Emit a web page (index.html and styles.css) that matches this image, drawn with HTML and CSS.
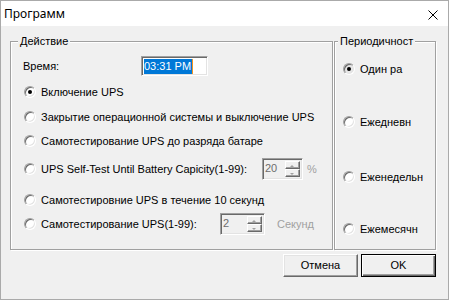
FILE: index.html
```html
<!DOCTYPE html>
<html lang="ru">
<head>
  <meta charset="UTF-8">
  <title>Программ</title>
  <link rel="stylesheet" href="styles.css">
</head>
<body>
  <div class="window">
    <div class="titlebar">
      <span class="title">Программ</span>
      <svg class="close" width="10" height="10" viewBox="0 0 10 10">
        <path d="M0.5 0.5 L9.5 9.5 M9.5 0.5 L0.5 9.5" stroke="#000" stroke-width="1"/>
      </svg>
    </div>

    <div class="content">
      <div class="groups">
        <fieldset class="group group-action">
          <legend>Действие</legend>
          <div class="row row-time">
            <span class="time-label">Время:</span>
            <div class="edit time-edit"><span class="selected">03:31 PM</span><span class="caret"></span></div>
          </div>
          <div class="row row-1"><span class="radio checked"></span><span class="opt">Включение UPS</span></div>
          <div class="row row-2"><span class="radio"></span><span class="opt">Закрытие операционной системы и выключение UPS</span></div>
          <div class="row row-3"><span class="radio"></span><span class="opt">Самотестирование UPS до разряда батаре</span></div>
          <div class="row row-4">
            <span class="radio"></span><span class="opt opt-capacity">UPS Self-Test Until Battery Capicity(1-99):</span>
            <div class="edit spin spin-percent">
              <span class="spin-value">20</span>
              <div class="spin-buttons"><span class="spin-btn up"></span><span class="spin-btn down"></span></div>
            </div>
            <span class="unit">%</span>
          </div>
          <div class="row row-5"><span class="radio"></span><span class="opt">Самотестировние UPS в течение 10 секунд</span></div>
          <div class="row row-6">
            <span class="radio"></span><span class="opt opt-seconds">Самотестирование UPS(1-99):</span>
            <div class="edit spin spin-seconds">
              <span class="spin-value">2</span>
              <div class="spin-buttons"><span class="spin-btn up"></span><span class="spin-btn down"></span></div>
            </div>
            <span class="unit unit-seconds">Секунд</span>
          </div>
        </fieldset>

        <fieldset class="group group-period">
          <legend>Периодичност</legend>
          <div class="row prow-1"><span class="radio checked grey"></span><span class="opt">Один ра</span></div>
          <div class="row prow-2"><span class="radio"></span><span class="opt">Ежедневн</span></div>
          <div class="row prow-3"><span class="radio"></span><span class="opt">Еженедельн</span></div>
          <div class="row prow-4"><span class="radio"></span><span class="opt">Ежемесячн</span></div>
        </fieldset>
      </div>

      <div class="buttons">
        <button class="btn">Отмена</button>
        <button class="btn btn-default">OK</button>
      </div>
    </div>
  </div>
</body>
</html>
```

FILE: styles.css
```css
/* Classic dialog */
html, body {
  margin: 0;
  padding: 0;
  background: #f0f0f0;
}

body {
  font-family: 'Liberation Sans', Arial, sans-serif;
  font-size: 11px;
  line-height: 13px;
  color: #000;
}

.window {
  width: 449px;
  height: 300px;
  box-sizing: border-box;
  border: 1px solid #aaaaaa;
  background: #f0f0f0;
  overflow: hidden;
}

.titlebar {
  height: 25px;
  background: #fff;
  display: flex;
  align-items: center;
  justify-content: space-between;
  padding: 0 10px 0 3px;
}

.title {
  font-family: 'Noto Sans', sans-serif;
  font-size: 12px;
  line-height: 16px;
  margin-top: 1px;
}

.close {
  display: block;
  margin-top: 2px;
}

.content {
  padding: 9px 11px 0 9px;
}

.groups {
  display: flex;
  gap: 1px;
  height: 215px;
}

/* Etched group boxes */
.group {
  margin: 0;
  padding: 0;
  min-width: 0;
  box-sizing: border-box;
  border: 1px solid #a0a0a0;
  box-shadow: inset 1px 1px #fff, 1px 1px #fff;
}

.group legend {
  padding: 0 2px;
  background: #f0f0f0;
  line-height: 13px;
}

.group-action {
  width: 323px;
}

.group-action legend {
  margin-left: 7px;
}

.group-period {
  width: 102px;
}

.group-period legend {
  margin-left: 3px;
}

.row {
  display: flex;
  align-items: center;
  height: 20px;
  white-space: nowrap;
}

.group-action .row {
  padding-left: 13px;
}

.group-period .row {
  padding-left: 8px;
}

.row-time { margin-top: 8px; padding-left: 12px; }
.row-1 { margin-top: 6px; }
.row-2 { margin-top: 5px; }
.row-3 { margin-top: 4px; }
.row-4 { margin-top: 7px; height: 22px; }
.row-5 { margin-top: 10px; }
.row-6 { margin-top: 3px; height: 22px; }

.prow-1 { margin-top: 11px; }
.prow-2 { margin-top: 33px; }
.prow-3 { margin-top: 35px; }
.prow-4 { margin-top: 32px; }

.group-action .row-time {
  padding-left: 12px;
}

.time-label {
  width: 118px;
}

/* Radio buttons */
.radio {
  position: relative;
  flex: none;
  width: 12px;
  height: 12px;
  box-sizing: border-box;
  border-radius: 50%;
  border: 1px solid;
  border-color: #a0a0a0 #fff #fff #a0a0a0;
  box-shadow: inset 1px 1px #696969, inset -1px -1px #e3e3e3;
  background: #fff;
}

.radio.grey {
  background: #e6e6e6;
}

.radio.checked::after {
  content: "";
  position: absolute;
  left: 3px;
  top: 3px;
  width: 4px;
  height: 4px;
  border-radius: 50%;
  background: #000;
}

.opt {
  margin-left: 5px;
}

.opt-capacity {
  width: 221px;
}

.opt-seconds {
  width: 179px;
}

/* Sunken edit boxes */
.edit {
  box-sizing: border-box;
  border: 1px solid;
  border-color: #a0a0a0 #fff #fff #a0a0a0;
  box-shadow: inset 1px 1px #696969, inset -1px -1px #e3e3e3;
}

.time-edit {
  width: 67px;
  height: 20px;
  background: #fff;
  display: flex;
  align-items: center;
  padding: 1px 2px 0;
}

.selected {
  background: #0078d7;
  color: #fff;
  line-height: 15px;
  padding-right: 1px;
}

.caret {
  width: 1px;
  height: 15px;
  background: #f7941d;
}

.spin {
  display: flex;
  height: 22px;
  background: #f0f0f0;
  padding: 2px;
}

.spin-percent {
  width: 41px;
}

.spin-seconds {
  width: 45px;
}

.spin-value {
  flex: 1;
  color: #6d6d6d;
  line-height: 15px;
}

.spin-buttons {
  width: 15px;
  display: flex;
  flex-direction: column;
}

.spin-btn {
  flex: 1;
  position: relative;
  box-sizing: border-box;
  border: 1px solid;
  border-color: #fff #696969 #696969 #fff;
  box-shadow: inset -1px -1px #a0a0a0;
  background: #f0f0f0;
}

.spin-btn::after {
  content: "";
  position: absolute;
  left: 4px;
  border-left: 2px solid transparent;
  border-right: 2px solid transparent;
}

.spin-btn.up::after {
  top: 3px;
  border-bottom: 2px solid #a0a0a0;
}

.spin-btn.down::after {
  top: 3px;
  border-top: 2px solid #a0a0a0;
}

.unit {
  margin-left: 4px;
  color: #a0a0a0;
}

.unit-seconds {
  margin-left: 12px;
}

/* Buttons */
.buttons {
  display: flex;
  justify-content: flex-end;
  gap: 3px;
  margin-top: 4px;
  padding-right: 1px;
}

.btn {
  width: 75px;
  height: 23px;
  box-sizing: border-box;
  margin: 0;
  padding: 0;
  font: inherit;
  color: #000;
  background: #f0f0f0;
  border: 1px solid;
  border-color: #fff #696969 #696969 #fff;
  box-shadow: inset -1px -1px #a0a0a0, inset 1px 1px #e3e3e3;
  border-radius: 0;
}

.btn-default {
  border-color: #000;
  box-shadow: inset 1px 1px #fff, inset -1px -1px #696969, inset -2px -2px #a0a0a0;
}
```
